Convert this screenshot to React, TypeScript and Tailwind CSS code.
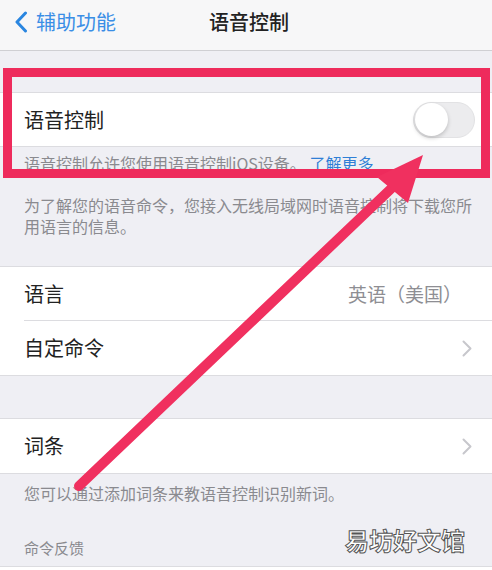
import React from 'react';

const font = { fontFamily: '"Noto Sans CJK SC", "Noto Sans", sans-serif' };

function Chevron() {
    return (
        <svg width="10" height="17" viewBox="0 0 10 17" fill="none" xmlns="http://www.w3.org/2000/svg">
            <path d="M1.5 1.5L8.5 8.5L1.5 15.5" stroke="#c7c7cc" strokeWidth="2" strokeLinecap="round" strokeLinejoin="round" />
        </svg>
    );
}

function Row({ label, value, chevron, inset }: { label: string; value?: string; chevron?: boolean; inset?: boolean }) {
    return (
        <div className="relative flex h-[54px] items-center justify-between bg-white pl-6 pr-5">
            <span className="text-[20px] text-[#222]">{label}</span>
            {value && <span className="pr-[10px] text-[19px] text-[#8e8e93]">{value}</span>}
            {chevron && <Chevron />}
            {inset && <div className="absolute bottom-0 left-6 right-0 h-px bg-[#dcdce0]" />}
        </div>
    );
}

export default function App() {
    return (
        <div className="relative h-[570px] w-full overflow-hidden bg-[#efeff4]" style={font}>
            {/* nav bar */}
            <div className="relative flex h-[51px] items-center border-b border-[#cfcfd3] bg-[#f7f7f8] pb-[6px]">
                <div className="flex items-center gap-[8px] pl-[14px]">
                    <svg width="14" height="22" viewBox="0 0 14 22" fill="none" xmlns="http://www.w3.org/2000/svg">
                        <path d="M11.5 2L3 11L11.5 20" stroke="#2a86e0" strokeWidth="3" strokeLinecap="round" strokeLinejoin="round" />
                    </svg>
                    <span className="text-[20px] text-[#3a8ee6]">辅助功能</span>
                </div>
                <span className="absolute left-1/2 -translate-x-1/2 pl-[6px] text-[20px] font-medium text-[#222]">语音控制</span>
            </div>

            <div className="h-[41px]" />

            <div className="border-y border-[#dcdce0]">
                <div className="flex h-[53px] items-center justify-between bg-white pl-6 pr-[17px]">
                    <span className="text-[20px] text-[#222]">语音控制</span>
                    <div className="flex h-[36px] w-[62px] items-center rounded-full border border-[#e2e2e4] bg-[#ececee] p-[1px]">
                        <div className="h-[33px] w-[33px] rounded-full bg-white shadow-[0_2px_4px_rgba(0,0,0,0.2)]" />
                    </div>
                </div>
            </div>

            <div className="pl-6 pr-3 pt-[6px] text-[16px] leading-[21px] text-[#8a8a8f]">
                <p>
                    语音控制允许您使用语音控制iOS设备。 <span className="text-[#2f7fd6]">了解更多</span>
                </p>
                <p className="mt-[21px]">为了解您的语音命令，您接入无线局域网时语音控制将下载您所用语言的信息。</p>
            </div>

            <div className="mt-[29px] border-y border-[#dcdce0]">
                <Row label="语言" value="英语（美国）" inset />
                <Row label="自定命令" chevron />
            </div>

            <div className="h-[42px]" />

            <div className="border-y border-[#dcdce0]">
                <Row label="词条" chevron />
            </div>

            <p className="px-6 pt-[9px] text-[16px] leading-[21px] text-[#8a8a8f]">您可以通过添加词条来教语音控制识别新词。</p>

            <p className="mt-[33px] px-6 text-[15px] leading-[21px] text-[#8a8a8f]">命令反馈</p>

            <div className="mt-[8px] h-[20px] border-t border-[#dcdce0] bg-white" />

            {/* annotation: red box */}
            <div className="pointer-events-none absolute left-[3px] top-[68px] h-[110px] w-[487px] border-[9px] border-[#ee2b5c]" />

            {/* annotation: arrow */}
            <svg className="pointer-events-none absolute left-0 top-0" width="492" height="570" viewBox="0 0 492 570" fill="none" xmlns="http://www.w3.org/2000/svg">
                <line x1="79" y1="486" x2="396" y2="184" stroke="#f0305f" strokeWidth="10" strokeLinecap="round" />
                <polygon points="423,155 377,177 408,203" fill="#f0305f" />
            </svg>

            {/* watermark */}
            <span className="pointer-events-none absolute left-[345px] top-[522px] text-[24px] font-bold text-white [-webkit-text-stroke:1px_#555]">
                易坊好文馆
            </span>
        </div>
    );
}
